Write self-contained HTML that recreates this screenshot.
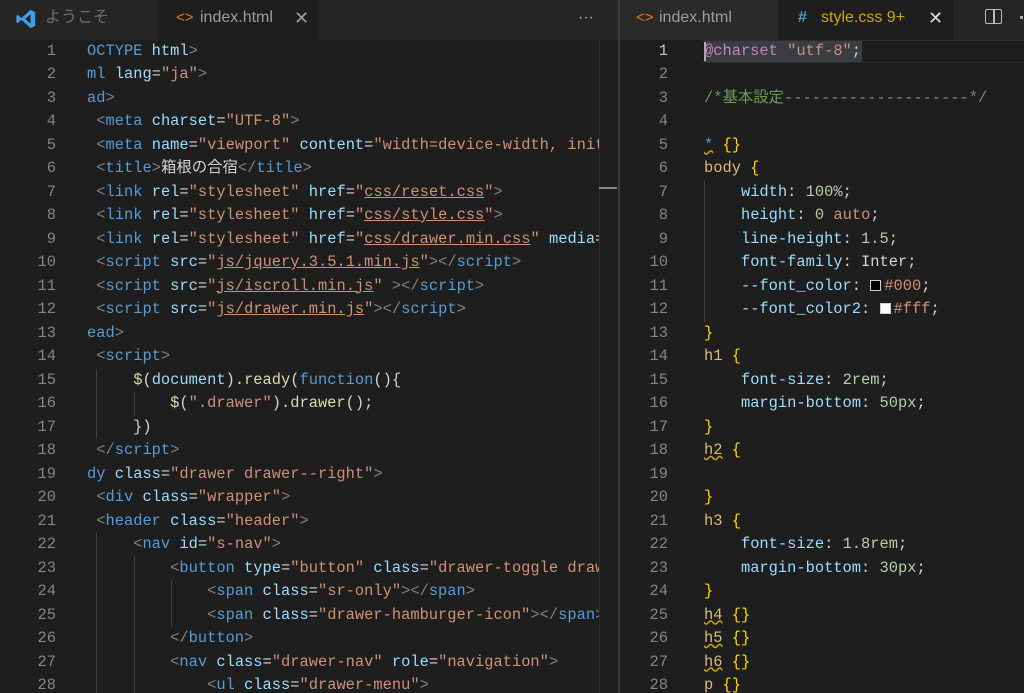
<!DOCTYPE html>
<html><head><meta charset="utf-8"><style>
*{margin:0;padding:0;box-sizing:border-box}
body{width:1024px;height:693px;overflow:hidden;background:#1e1e1e;position:relative;font-family:"Liberation Mono","Noto Sans CJK JP",monospace}
.tabs{position:absolute;top:0;height:40px;background:#252526}
.tab{position:absolute;top:0;height:40px;font-family:"Liberation Sans","Noto Sans CJK JP",sans-serif;font-size:16px;line-height:36px;color:#8b8b8b}
.pane{position:absolute;top:40px;bottom:0;overflow:hidden}
.ln{position:absolute;font-size:15.4px;line-height:23.5px;white-space:pre;color:#858585;text-align:right}
.cd{position:absolute;font-size:15.4px;line-height:23.5px;white-space:pre;color:#d4d4d4}
.b{color:#808080}.t{color:#569cd6}.a{color:#9cdcfe}.s{color:#ce9178}.u{text-decoration:underline;text-decoration-color:#ce9178}
.y{color:#ffd700}.sel{color:#d7ba7d}.n{color:#b5cea8}.c{color:#6a9955}.p{color:#c586c0}.f{color:#dcdcaa}.k{color:#569cd6}.w{color:#d4d4d4}
.sq{display:inline-block;width:11px;height:11px;border:1px solid #ccc;vertical-align:-1px;margin-right:3px}
.g{position:absolute;width:1px;background:#404040}
.sq2{text-decoration:underline wavy #cca700}
</style></head><body>
<div class="tabs" style="left:0;width:618px"></div>
<div class="tabs" style="left:620px;width:404px"></div>
<div class="tab" style="left:0;width:158px;padding-left:14px">
<svg width="22" height="22" viewBox="0 0 24 24" style="position:absolute;left:15px;top:8px"><path d="M17 2 L22 4.5 V19.5 L17 22 L7 13 L3 16.5 L1.5 15.5 V8.5 L3 7.5 L7 11 Z M17 7 L11 12 L17 17 Z" fill="#3e9fe6"/></svg>
<span style="position:absolute;left:45px;color:#6e6e6e">ようこそ</span></div>
<div class="tab" style="left:158px;width:161px;background:#1e1e1e">
<span style="position:absolute;left:18px;color:#e37933;font-size:15px">&lt;&gt;</span>
<span style="position:absolute;left:42px;color:#9d9d9d">index.html</span>
<span style="position:absolute;left:136px;color:#9d9d9d;font-size:18px">✕</span></div>
<div class="tab" style="left:578px;color:#aaa;font-size:16px">···</div>
<div class="tab" style="left:620px;width:158px;background:#2a2a2a">
<span style="position:absolute;left:16px;color:#e37933;font-size:15px">&lt;&gt;</span>
<span style="position:absolute;left:39px;color:#9d9d9d">index.html</span></div>
<div class="tab" style="left:778px;width:175px;background:#1e1e1e">
<span style="position:absolute;left:20px;color:#519aba;font-weight:bold">#</span>
<span style="position:absolute;left:43px;color:#cca700">style.css 9+</span>
<span style="position:absolute;left:150px;color:#ddd;font-size:18px">✕</span></div>
<div style="position:absolute;left:985px;top:9px;width:17px;height:15px;border:1.5px solid #bbb;border-radius:2px"></div>
<div style="position:absolute;left:993px;top:9px;width:1.5px;height:15px;background:#bbb"></div>
<div style="position:absolute;left:1020px;top:16px;width:3px;height:3px;background:#aaa"></div>
<div style="position:absolute;left:618px;top:0;width:2px;height:693px;background:#3c3c3c"></div>
<div style="position:absolute;left:599px;top:40px;width:1px;height:653px;background:#2b2b2b"></div>
<div style="position:absolute;left:599px;top:187px;width:18px;height:2px;background:#888"></div>

<div class="pane" style="left:0;width:599px">
<div class="ln" style="left:0;width:56px;top:-0.5px">1
2
3
4
5
6
7
8
9
10
11
12
13
14
15
16
17
18
19
20
21
22
23
24
25
26
27
28</div>
<div class="g" style="left:96px;top:329px;height:70px"></div>
<div class="g" style="left:134px;top:352px;height:24px"></div>
<div class="g" style="left:96px;top:493px;height:170px"></div>
<div class="g" style="left:134px;top:516px;height:150px"></div>
<div class="g" style="left:171px;top:540px;height:47px"></div>
<div class="cd" style="left:87px;top:-0.5px"><span class="t">OCTYPE</span> <span class="a">html</span><span class="b">&gt;</span>
<span class="t">ml</span> <span class="a">lang</span>=<span class="s">"ja"</span><span class="b">&gt;</span>
<span class="t">ad</span><span class="b">&gt;</span>
 <span class="b">&lt;</span><span class="t">meta</span> <span class="a">charset</span>=<span class="s">"UTF-8"</span><span class="b">&gt;</span>
 <span class="b">&lt;</span><span class="t">meta</span> <span class="a">name</span>=<span class="s">"viewport"</span> <span class="a">content</span>=<span class="s">"width=device-width, initial</span>
 <span class="b">&lt;</span><span class="t">title</span><span class="b">&gt;</span>箱根の合宿<span class="b">&lt;/</span><span class="t">title</span><span class="b">&gt;</span>
 <span class="b">&lt;</span><span class="t">link</span> <span class="a">rel</span>=<span class="s">"stylesheet"</span> <span class="a">href</span>=<span class="s">"<span class="u">css/reset.css</span>"</span><span class="b">&gt;</span>
 <span class="b">&lt;</span><span class="t">link</span> <span class="a">rel</span>=<span class="s">"stylesheet"</span> <span class="a">href</span>=<span class="s">"<span class="u">css/style.css</span>"</span><span class="b">&gt;</span>
 <span class="b">&lt;</span><span class="t">link</span> <span class="a">rel</span>=<span class="s">"stylesheet"</span> <span class="a">href</span>=<span class="s">"<span class="u">css/drawer.min.css</span>"</span> <span class="a">media</span>=<span class="s">"all"</span>
 <span class="b">&lt;</span><span class="t">script</span> <span class="a">src</span>=<span class="s">"<span class="u">js/jquery.3.5.1.min.js</span>"</span><span class="b">&gt;&lt;/</span><span class="t">script</span><span class="b">&gt;</span>
 <span class="b">&lt;</span><span class="t">script</span> <span class="a">src</span>=<span class="s">"<span class="u">js/iscroll.min.js</span>"</span> <span class="b">&gt;&lt;/</span><span class="t">script</span><span class="b">&gt;</span>
 <span class="b">&lt;</span><span class="t">script</span> <span class="a">src</span>=<span class="s">"<span class="u">js/drawer.min.js</span>"</span><span class="b">&gt;&lt;/</span><span class="t">script</span><span class="b">&gt;</span>
<span class="t">ead</span><span class="b">&gt;</span>
 <span class="b">&lt;</span><span class="t">script</span><span class="b">&gt;</span>
     <span class="f">$</span>(<span class="a">document</span>).<span class="f">ready</span>(<span class="k">function</span>(){
         <span class="f">$</span>(<span class="s">".drawer"</span>).<span class="f">drawer</span>();
     })
 <span class="b">&lt;/</span><span class="t">script</span><span class="b">&gt;</span>
<span class="t">dy</span> <span class="a">class</span>=<span class="s">"drawer drawer--right"</span><span class="b">&gt;</span>
 <span class="b">&lt;</span><span class="t">div</span> <span class="a">class</span>=<span class="s">"wrapper"</span><span class="b">&gt;</span>
 <span class="b">&lt;</span><span class="t">header</span> <span class="a">class</span>=<span class="s">"header"</span><span class="b">&gt;</span>
     <span class="b">&lt;</span><span class="t">nav</span> <span class="a">id</span>=<span class="s">"s-nav"</span><span class="b">&gt;</span>
         <span class="b">&lt;</span><span class="t">button</span> <span class="a">type</span>=<span class="s">"button"</span> <span class="a">class</span>=<span class="s">"drawer-toggle drawer</span>
             <span class="b">&lt;</span><span class="t">span</span> <span class="a">class</span>=<span class="s">"sr-only"</span><span class="b">&gt;&lt;/</span><span class="t">span</span><span class="b">&gt;</span>
             <span class="b">&lt;</span><span class="t">span</span> <span class="a">class</span>=<span class="s">"drawer-hamburger-icon"</span><span class="b">&gt;&lt;/</span><span class="t">span</span><span class="b">&gt;</span>
         <span class="b">&lt;/</span><span class="t">button</span><span class="b">&gt;</span>
         <span class="b">&lt;</span><span class="t">nav</span> <span class="a">class</span>=<span class="s">"drawer-nav"</span> <span class="a">role</span>=<span class="s">"navigation"</span><span class="b">&gt;</span>
             <span class="b">&lt;</span><span class="t">ul</span> <span class="a">class</span>=<span class="s">"drawer-menu"</span><span class="b">&gt;</span></div>
</div>

<div class="pane" style="left:620px;width:404px">
<div style="position:absolute;left:82px;top:0;width:322px;height:23px;border-top:1px solid #2e2e2e;border-bottom:1px solid #2e2e2e"></div>
<div style="position:absolute;left:84px;top:1px;width:158px;height:21px;background:#3a3d41"></div>
<div style="position:absolute;left:84px;top:2px;width:2px;height:19px;background:#aeafad"></div>
<div class="g" style="left:84px;top:141px;height:141px"></div>
<div class="ln" style="left:0;width:48px;top:-0.5px"><span style="color:#c6c6c6">1</span>
2
3
4
5
6
7
8
9
10
11
12
13
14
15
16
17
18
19
20
21
22
23
24
25
26
27
28</div>
<div class="cd" style="left:84px;top:-0.5px"><span class="p">@charset</span> <span class="s">"utf-8"</span>;

<span class="c">/*基本設定--------------------*/</span>

<span class="t sq2">*</span> <span class="y">{}</span>
<span class="sel">body</span> <span class="y">{</span>
    <span class="a">width</span>: <span class="n">100%</span>;
    <span class="a">height</span>: <span class="n">0</span> <span class="s">auto</span>;
    <span class="a">line-height</span>: <span class="n">1.5</span>;
    <span class="a">font-family</span>: Inter;
    <span class="a">--font_color</span>: <span class="sq" style="background:#000"></span><span class="s">#000</span>;
    <span class="a">--font_color2</span>: <span class="sq" style="background:#fff"></span><span class="s">#fff</span>;
<span class="y">}</span>
<span class="sel">h1</span> <span class="y">{</span>
    <span class="a">font-size</span>: <span class="n">2rem</span>;
    <span class="a">margin-bottom</span>: <span class="n">50px</span>;
<span class="y">}</span>
<span class="sel sq2">h2</span> <span class="y">{</span>

<span class="y">}</span>
<span class="sel">h3</span> <span class="y">{</span>
    <span class="a">font-size</span>: <span class="n">1.8rem</span>;
    <span class="a">margin-bottom</span>: <span class="n">30px</span>;
<span class="y">}</span>
<span class="sel sq2">h4</span> <span class="y">{}</span>
<span class="sel sq2">h5</span> <span class="y">{}</span>
<span class="sel sq2">h6</span> <span class="y">{}</span>
<span class="sel">p</span> <span class="y">{}</span></div>
</div>
</body></html>
